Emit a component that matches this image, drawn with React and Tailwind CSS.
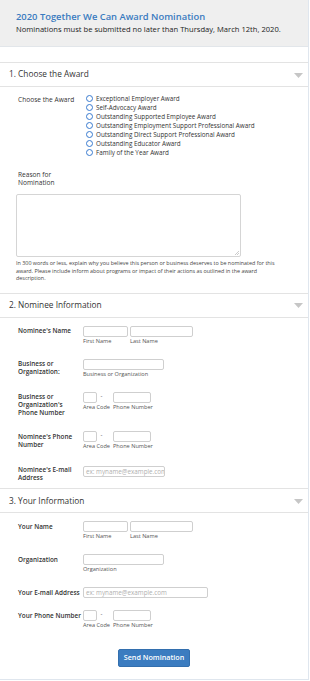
import React from "react";

const F = { fontFamily: "'Open Sans', Lato, sans-serif" };

function SectionHeader({ title }) {
  return (
    <div className="flex h-[25px] items-center justify-between border-y border-[#e3e3e3] pl-[9px] pr-[5px]">
      <span className="text-[8.3px] text-[#333]">{title}</span>
      <svg width="9" height="5" viewBox="0 0 9 5" className="mt-[1px]">
        <polygon points="0,0 9,0 4.5,5" fill="#c6c6c6" />
      </svg>
    </div>
  );
}

function Input({ w, placeholder }) {
  return (
    <div
      className="h-[10.5px] overflow-hidden whitespace-nowrap rounded-[2px] border border-[#cfcfcf] bg-white pl-[2px] text-[6.3px] leading-[9px] text-[#b0b0b0]"
      style={{ width: w }}
    >
      {placeholder}
    </div>
  );
}

function Sub({ children }) {
  return (
    <div className="mt-[1.5px] whitespace-nowrap text-[5.6px] leading-[7px] text-[#555]">
      {children}
    </div>
  );
}

function Row({ label, children, cls = "py-[7px]", lcls = "pt-[1.25px]" }) {
  return (
    <div className={`flex pl-[18px] ${cls}`}>
      <div className={`w-[65px] shrink-0 whitespace-nowrap text-[6.4px] font-semibold leading-[8px] text-[#333] ${lcls}`}>
        {label}
      </div>
      <div>{children}</div>
    </div>
  );
}

function NameField() {
  return (
    <div className="flex gap-[2.5px]">
      <div className="w-[44.5px]">
        <Input w="44.5px" />
        <Sub>First Name</Sub>
      </div>
      <div className="w-[62.5px]">
        <Input w="62.5px" />
        <Sub>Last Name</Sub>
      </div>
    </div>
  );
}

function PhoneField() {
  return (
    <div className="flex">
      <div className="w-[13.5px]">
        <Input w="13.5px" />
        <Sub>Area Code</Sub>
      </div>
      <div className="ml-[4px] w-[12.5px] text-[6px] leading-[9px] text-[#333]">-</div>
      <div className="w-[37.5px]">
        <Input w="37.5px" />
        <Sub>Phone Number</Sub>
      </div>
    </div>
  );
}

const awards = [
  "Exceptional Employer Award",
  "Self-Advocacy Award",
  "Outstanding Supported Employee Award",
  "Outstanding Employment Support Professional Award",
  "Outstanding Direct Support Professional Award",
  "Outstanding Educator Award",
  "Family of the Year Award",
];

export default function App() {
  return (
    <div className="w-[309px] border-r border-b border-[#dfe6ee] bg-white" style={F}>
      <div className="h-[47px] border-b border-[#e2e6ea] bg-[#efefef] pl-[16px] pt-[10px]">
        <div className="text-[9.4px] font-semibold leading-[14px] text-[#3a7bc0]">
          2020 Together We Can Award Nomination
        </div>
        <div className="text-[7.6px] leading-[11px] text-[#222]">
          Nominations must be submitted no later than Thursday, March 12th, 2020.
        </div>
      </div>

      <div className="mt-[15px]">
        <SectionHeader title="1. Choose the Award" />
        <div className="pt-[7px]">
          <div className="flex pl-[18px]">
            <div className="w-[68px] shrink-0 pt-[0.5px] text-[6.6px] leading-[9px] text-[#333]">
              Choose the Award
            </div>
            <div>
              {awards.map((a) => (
                <div key={a} className="flex h-[9px] items-center">
                  <span className="mr-[3px] h-[7px] w-[7px] rounded-full border border-[#3a7bd0]" />
                  <span className="whitespace-nowrap text-[6.3px] leading-[9px] text-[#333]">{a}</span>
                </div>
              ))}
            </div>
          </div>
          <div className="mt-[13.5px] pl-[18px] text-[6.6px] leading-[8px] text-[#333]">
            Reason for
            <br />
            Nomination
          </div>
          <div className="relative ml-[16px] mt-[7.5px] h-[63.3px] w-[225px] rounded-[2px] border border-[#d5d5d5]">
            <svg width="4" height="4" viewBox="0 0 4 4" className="absolute bottom-[1px] right-[1px]">
              <line x1="0" y1="4" x2="4" y2="0" stroke="#aaa" strokeWidth="0.6" />
              <line x1="2" y1="4" x2="4" y2="2" stroke="#aaa" strokeWidth="0.6" />
            </svg>
          </div>
          <div className="mt-[3px] w-[282px] pl-[16px] text-[5.4px] leading-[7.4px] text-[#444]">
            In 300 words or less, explain why you believe this person or business deserves to be nominated for this
            award. Please include inform about programs or impact of their actions as outlined in the award
            description.
          </div>
        </div>
      </div>

      <div className="mt-[10px]">
        <SectionHeader title="2. Nominee Information" />
        <div className="pt-[1.5px]">
          <Row label="Nominee's Name">
            <NameField />
          </Row>
          <Row label={<>Business or<br />Organization:</>}>
            <div className="w-[81px]">
              <Input w="81px" />
              <Sub>Business or Organization</Sub>
            </div>
          </Row>
          <Row label={<>Business or<br />Organization's<br />Phone Number</>}>
            <PhoneField />
          </Row>
          <Row label={<>Nominee's Phone<br />Number</>}>
            <PhoneField />
          </Row>
          <Row label={<>Nominee's E-mail<br />Address</>} cls="pt-[9px] pb-[6px]" lcls="pt-0">
            <Input w="82px" placeholder="ex: myname@example.com" />
          </Row>
        </div>
      </div>

      <div>
        <SectionHeader title="3. Your Information" />
        <div className="pt-[1px]">
          <Row label="Your Name">
            <NameField />
          </Row>
          <Row label="Organization">
            <div className="w-[81px]">
              <Input w="81px" />
              <Sub>Organization</Sub>
            </div>
          </Row>
          <Row label="Your E-mail Address" cls="pt-[7px] pb-[5.5px]">
            <Input w="125px" placeholder="ex: myname@example.com" />
          </Row>
          <Row label="Your Phone Number">
            <PhoneField />
          </Row>
        </div>
        <div className="flex justify-center pb-[12px] pt-[12.6px]">
          <button className="h-[18px] w-[72px] rounded-[2px] border border-[#336fae] bg-[#3b7cc0] text-[7.2px] font-semibold text-white">
            Send Nomination
          </button>
        </div>
      </div>
    </div>
  );
}
